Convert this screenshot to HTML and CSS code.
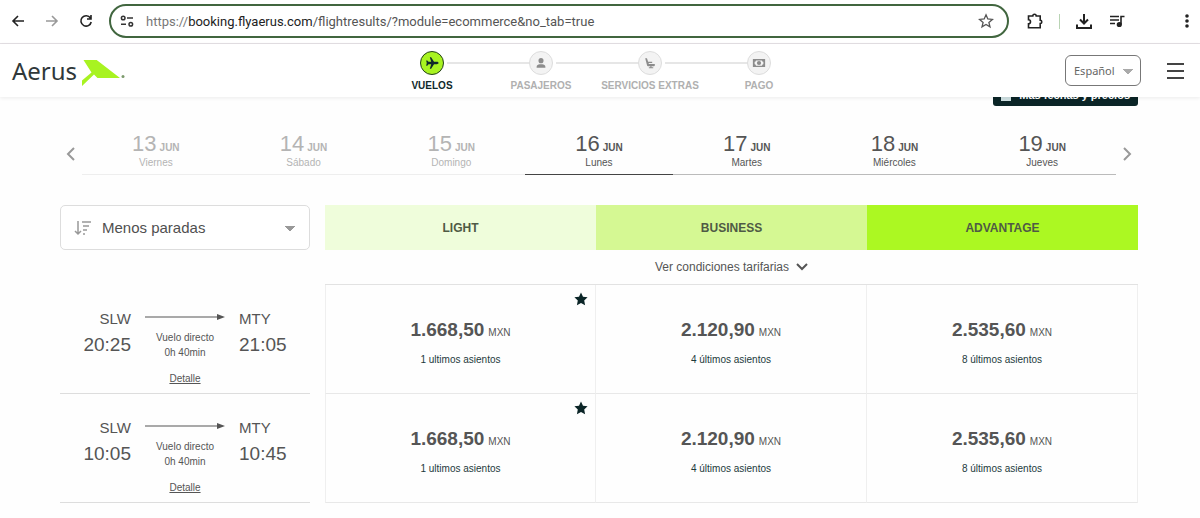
FILE: index.html
```html
<!DOCTYPE html>
<html lang="es">
<head>
    <meta charset="UTF-8">
    <meta name="viewport" content="width=device-width, initial-scale=1.0">
    <title>Aerus - Vuelos</title>
    <link rel="stylesheet" href="styles.css">
</head>
<body>
    <!-- Browser bar -->
    <div class="browser">
        <div class="nav-buttons">
            <button class="icon-btn" aria-label="Back"><svg viewBox="0 0 18 18"><path d="M15 9H4M9 4L4 9l5 5"/></svg></button>
            <button class="icon-btn muted" aria-label="Forward"><svg viewBox="0 0 18 18"><path d="M3 9h11M9 4l5 5-5 5"/></svg></button>
            <button class="icon-btn" aria-label="Reload"><svg viewBox="0 0 18 18"><path d="M13.4 6A5.2 5.2 0 1 0 14.2 10M14 3v4h-4"/></svg></button>
        </div>
        <div class="address">
            <svg class="site-info" viewBox="0 0 14 14"><circle cx="3.2" cy="4" r="1.8"/><path d="M7 4h6M1 10.2h5"/><circle cx="10.8" cy="10.2" r="1.8"/></svg>
            <div class="url"><span>https://</span>booking.flyaerus.com<span class="path">/flightresults/?module=ecommerce&amp;no_tab=true</span></div>
            <button class="icon-btn star-btn" aria-label="Bookmark"><svg viewBox="0 0 18 18"><path d="M9 2.8l1.8 4.2 4.6.4-3.5 3 1.1 4.5L9 12.5l-4 2.4 1.1-4.5-3.5-3 4.6-.4z"/></svg></button>
        </div>
        <div class="tools">
            <button class="icon-btn" aria-label="Extensions"><svg viewBox="0 0 18 18"><path d="M2.5 4h4.3a1.7 1.7 0 0 1 3.4 0h4v4.3a1.6 1.6 0 0 1 0 3.2v4.2H2.5v-3.9a2 2 0 0 0 0-4z"/></svg></button>
            <span class="divider"></span>
            <button class="icon-btn" aria-label="Downloads"><svg viewBox="0 0 18 18"><path class="thick" d="M9 2v9M5 7.5l4 4 4-4M2 12.5V16h14v-3.5"/></svg></button>
            <button class="icon-btn" aria-label="Media"><svg viewBox="0 0 18 18"><path d="M2 4.5h9M2 8h9M2 11.5h5M13 12.5V4.5h3.5"/><circle class="solid" cx="11.3" cy="12.5" r="1.8"/></svg></button>
            <button class="icon-btn menu-dots" aria-label="Menu"><svg viewBox="0 0 18 18"><circle class="solid" cx="9" cy="4" r="1"/><circle class="solid" cx="9" cy="9" r="1"/><circle class="solid" cx="9" cy="14" r="1"/></svg></button>
        </div>
    </div>

    <!-- Site header -->
    <header class="site-header">
        <a class="logo" href="#">
            <span>Aerus</span>
            <svg viewBox="0 0 44 28"><path d="M2.5 1H15.7L39 19H16.5L13 15.5 1 27V21.5L10.5 13.5z"/><circle cx="42" cy="17.5" r="1.5"/></svg>
        </a>
        <ol class="steps">
            <li class="step active">
                <span class="dot"><svg viewBox="0 0 16 16"><path d="M15.5 8c0-.9-1-1.3-2-1.3h-3.2L7 1.5H5.5l1.6 5.2H4L2.6 5H1.3L2 8l-.7 3h1.3L4 9.3h3.1L5.5 14.5H7l3.3-5.2h3.2c1 0 2-.4 2-1.3z"/></svg></span>
                VUELOS
            </li>
            <li class="step">
                <span class="dot"><svg viewBox="0 0 16 16"><circle cx="8" cy="5.3" r="2.9"/><path d="M3 13.5v-1.2c0-2 1.7-3 3.5-3h3c1.8 0 3.5 1 3.5 3v1.2z"/></svg></span>
                PASAJEROS
            </li>
            <li class="step">
                <span class="dot"><svg viewBox="0 0 16 16"><path d="M2.5 2.5h2l1.4 4h4.6V8H6.4l.3 1h6.8v1.5c0 .8-.7 1.2-1.5 1.2H9.7v1.1h2v1.2h-5v-1.2h1.7v-1.1H6.3c-1 0-1.5-.5-1.7-1.2z"/></svg></span>
                SERVICIOS EXTRAS
            </li>
            <li class="step">
                <span class="dot"><svg viewBox="0 0 16 16"><path fill-rule="evenodd" d="M1 3.5h14v9H1zM4.5 5c0 .8-.7 1.5-1.5 1.5v3c.8 0 1.5.7 1.5 1.5h7c0-.8.7-1.5 1.5-1.5v-3c-.8 0-1.5-.7-1.5-1.5z"/><circle cx="8" cy="8" r="2.4"/></svg></span>
                PAGO
            </li>
        </ol>
        <div class="header-right">
            <select class="language" aria-label="Idioma">
                <option>Español</option>
                <option>English</option>
            </select>
            <button class="hamburger" aria-label="Menú"><span></span><span></span><span></span></button>
        </div>
    </header>

    <main>
        <button class="more-dates">
            <svg viewBox="0 0 12 12"><path d="M1 2h2V0h1.500v2h3V0H9v2h2v10H1z"/></svg>
            Más fechas y precios
        </button>

        <!-- Day selector -->
        <nav class="days" aria-label="Fechas">
            <button class="arrow" aria-label="Anterior"><svg viewBox="0 0 10 14"><path d="M8 1L2 7l6 6"/></svg></button>
            <button class="day past"><span class="date">13 <b>JUN</b></span><span class="weekday">Viernes</span></button>
            <button class="day past"><span class="date">14 <b>JUN</b></span><span class="weekday">Sábado</span></button>
            <button class="day past"><span class="date">15 <b>JUN</b></span><span class="weekday">Domingo</span></button>
            <button class="day selected"><span class="date">16 <b>JUN</b></span><span class="weekday">Lunes</span></button>
            <button class="day"><span class="date">17 <b>JUN</b></span><span class="weekday">Martes</span></button>
            <button class="day"><span class="date">18 <b>JUN</b></span><span class="weekday">Miércoles</span></button>
            <button class="day"><span class="date">19 <b>JUN</b></span><span class="weekday">Jueves</span></button>
            <button class="arrow" aria-label="Siguiente"><svg viewBox="0 0 10 14"><path d="M2 1l6 6-6 6"/></svg></button>
        </nav>

        <!-- Flights and fares -->
        <table class="flights">
            <thead>
                <tr class="fares">
                    <td class="sort-cell">
                        <div class="sort">
                            <svg viewBox="0 0 18 16"><path d="M4 1v13M1 11l3 3 3-3M8 2h9M9 6h6M9 10h4M9 14h2"/></svg>
                            <select aria-label="Ordenar por">
                                <option>Menos paradas</option>
                                <option>Menor precio</option>
                            </select>
                        </div>
                    </td>
                    <th class="light" scope="col">LIGHT</th>
                    <th class="business" scope="col">BUSINESS</th>
                    <th class="advantage" scope="col">ADVANTAGE</th>
                </tr>
                <tr>
                    <td></td>
                    <td class="conditions" colspan="3">
                        <button>Ver condiciones tarifarias <svg viewBox="0 0 12 8"><path d="M1 1l5 5 5-5"/></svg></button>
                    </td>
                </tr>
            </thead>
            <tbody>
                <tr>
                    <th class="flight" scope="row">
                        <div class="route">
                            <div class="place from"><span>SLW</span><time>20:25</time></div>
                            <div class="info">
                                <svg viewBox="0 0 80 6"><path d="M0 2.5h73v1H0zM72 0l8 3-8 3z"/></svg>
                                <span>Vuelo directo</span>
                                <span>0h 40min</span>
                                <a href="#">Detalle</a>
                            </div>
                            <div class="place"><span>MTY</span><time>21:05</time></div>
                        </div>
                    </th>
                    <td class="fare">
                        <svg class="best" viewBox="0 0 14 14"><path d="M7 .5l2 4.3 4.6.5-3.4 3.2.9 4.7L7 10.9l-4.1 2.3.9-4.7L.4 5.3 5 4.8z"/></svg>
                        <button><span class="price"><b>1.668,50</b> MXN</span><span class="seats">1 ultimos asientos</span></button>
                    </td>
                    <td class="fare"><button><span class="price"><b>2.120,90</b> MXN</span><span class="seats">4 últimos asientos</span></button></td>
                    <td class="fare"><button><span class="price"><b>2.535,60</b> MXN</span><span class="seats">8 últimos asientos</span></button></td>
                </tr>
                <tr>
                    <th class="flight" scope="row">
                        <div class="route">
                            <div class="place from"><span>SLW</span><time>10:05</time></div>
                            <div class="info">
                                <svg viewBox="0 0 80 6"><path d="M0 2.5h73v1H0zM72 0l8 3-8 3z"/></svg>
                                <span>Vuelo directo</span>
                                <span>0h 40min</span>
                                <a href="#">Detalle</a>
                            </div>
                            <div class="place"><span>MTY</span><time>10:45</time></div>
                        </div>
                    </th>
                    <td class="fare">
                        <svg class="best" viewBox="0 0 14 14"><path d="M7 .5l2 4.3 4.6.5-3.4 3.2.9 4.7L7 10.9l-4.1 2.3.9-4.7L.4 5.3 5 4.8z"/></svg>
                        <button><span class="price"><b>1.668,50</b> MXN</span><span class="seats">1 ultimos asientos</span></button>
                    </td>
                    <td class="fare"><button><span class="price"><b>2.120,90</b> MXN</span><span class="seats">4 últimos asientos</span></button></td>
                    <td class="fare"><button><span class="price"><b>2.535,60</b> MXN</span><span class="seats">8 últimos asientos</span></button></td>
                </tr>
            </tbody>
        </table>
    </main>
</body>
</html>
```
FILE: styles.css
```css
* {
    box-sizing: border-box;
}

body {
    margin: 0;
    font-family: "Liberation Sans", Arial, sans-serif;
    background: #fefefe;
    color: #555;
}

button {
    font-family: inherit;
    color: inherit;
    background: none;
    border: none;
    padding: 0;
    cursor: pointer;
}

svg {
    display: block;
}

/* Browser bar */
.browser {
    display: flex;
    align-items: center;
    gap: 14px;
    height: 44px;
    padding: 0 4px 1px 9px;
    background: #fff;
    border-bottom: 1px solid #e4e0e4;
}

.nav-buttons {
    display: flex;
    gap: 16px;
}

.icon-btn svg {
    width: 18px;
    height: 18px;
    fill: none;
    stroke: #222;
    stroke-width: 1.6;
}

.icon-btn .thick {
    stroke-width: 2;
}

.icon-btn .solid {
    fill: #222;
}

.icon-btn.muted svg {
    stroke: #999;
}

.address {
    flex: 1;
    display: flex;
    align-items: center;
    gap: 12px;
    height: 34px;
    padding: 0 12px 0 9px;
    border: 2px solid #41663f;
    border-radius: 17px;
}

.site-info {
    width: 14px;
    height: 14px;
    fill: none;
    stroke: #333;
    stroke-width: 1.5;
}

.url {
    flex: 1;
    font-family: Roboto, "Noto Sans", sans-serif;
    font-size: 13px;
    color: #222;
    white-space: nowrap;
}

.url span {
    color: #777;
}

.url .path {
    color: #555;
}

.icon-btn.star-btn svg {
    stroke: #555;
    stroke-width: 1.3;
}

.tools {
    display: flex;
    align-items: center;
    gap: 15px;
    width: 173px;
    padding-left: 3px;
}

.divider {
    width: 1px;
    height: 15px;
    background: #b9d4b4;
}

.menu-dots {
    margin-left: auto;
}

/* Site header */
.site-header {
    position: relative;
    z-index: 2;
    display: grid;
    grid-template-columns: 1fr auto 1fr;
    height: 53px;
    padding: 0 16px 0 12px;
    background: #fff;
    box-shadow: 0 1px 4px rgba(0, 0, 0, 0.08);
}

.logo {
    display: flex;
    align-items: center;
    gap: 4px;
    font-family: "Noto Sans", "Open Sans", sans-serif;
    font-size: 24px;
    line-height: 32px;
    color: #30383a;
    text-decoration: none;
}

.logo svg {
    width: 44px;
    height: 28px;
    margin-top: 4px;
    fill: #a8f321;
}

.logo circle {
    fill: #7c9a6c;
}

.steps {
    display: grid;
    grid-template-columns: repeat(4, 109px);
    margin: 0 5px 0 0;
    padding: 7px 0 0;
    list-style: none;
}

.step {
    position: relative;
    display: flex;
    flex-direction: column;
    align-items: center;
    gap: 5px;
    font-size: 10px;
    line-height: 12px;
    font-weight: bold;
    color: #b0b0b0;
    white-space: nowrap;
}

/* line that joins a step with the next one */
.step:not(:last-child)::after {
    content: "";
    position: absolute;
    top: 11px;
    left: calc(50% + 15px);
    width: calc(100% - 26px);
    height: 2px;
    background: #e6e6e6;
}

.step.active {
    color: #10292b;
}

.dot {
    display: flex;
    align-items: center;
    justify-content: center;
    width: 24px;
    height: 24px;
    border: 1px solid #ddd;
    border-radius: 50%;
    background: #f3f3f3;
}

.dot svg {
    width: 14px;
    height: 14px;
    fill: #8c8c8c;
}

.active .dot {
    border-color: #24401c;
    background: #a8f321;
}

.active .dot svg {
    fill: #10292b;
}

.header-right {
    display: flex;
    align-items: center;
    justify-content: flex-end;
    gap: 26px;
}

.language {
    appearance: none;
    width: 76px;
    height: 31px;
    padding: 0 8px;
    border: 1px solid #777;
    border-radius: 6px;
    background: linear-gradient(to bottom right, #aaa 50%, transparent 50%) 62px 13px / 5px 6px no-repeat,
        linear-gradient(to bottom left, #aaa 50%, transparent 50%) 57px 13px / 5px 6px no-repeat, #fff;
    font-family: "Noto Sans", "Open Sans", sans-serif;
    font-size: 11px;
    color: #666;
}

.hamburger {
    display: flex;
    flex-direction: column;
    gap: 5px;
    width: 17px;
}

.hamburger span {
    height: 2px;
    background: #444;
}

/* Content */
main {
    padding: 0 62px 14px 60px;
}

.more-dates {
    display: flex;
    align-items: center;
    gap: 7px;
    height: 22px;
    margin: -13px 0 0 auto;
    padding: 0 8px 0 7px;
    border-radius: 3px;
    background: #0b2527;
    color: #fff;
    font-size: 11px;
    font-weight: bold;
}

.more-dates svg {
    width: 12px;
    height: 12px;
    fill: #cfe0e2;
}

.days {
    display: grid;
    grid-template-columns: 22px repeat(7, 1fr) 22px;
    padding-top: 26px;
}

.day {
    display: flex;
    flex-direction: column;
    align-items: center;
    padding-bottom: 4px;
    border-bottom: 1px solid #bbb;
}

.day.past {
    color: #b4b4b4;
    border-color: #eee;
}

.day.selected {
    border-color: #444;
}

.date {
    display: flex;
    align-items: baseline;
    gap: 3px;
    font-size: 22px;
    line-height: 24px;
}

.date b {
    font-size: 10px;
    line-height: 12px;
}

.weekday {
    font-size: 10px;
    line-height: 14px;
}

.arrow {
    display: flex;
    align-items: center;
    justify-content: center;
}

.arrow svg {
    width: 10px;
    height: 14px;
    fill: none;
    stroke: #999;
    stroke-width: 2;
}

/* Flights table */
.flights {
    width: 100%;
    margin-top: 30px;
    border-spacing: 0;
    table-layout: fixed;
}

.flights td,
.flights th {
    padding: 0;
    vertical-align: top;
}

.flights .sort-cell {
    width: 265px;
}

.sort {
    position: relative;
    width: 250px;
}

.sort svg {
    position: absolute;
    top: 15px;
    left: 14px;
    width: 18px;
    height: 16px;
    fill: none;
    stroke: #999;
    stroke-width: 1.5;
    pointer-events: none;
}

.sort select {
    display: block;
    appearance: none;
    width: 100%;
    height: 45px;
    padding: 0 41px;
    border: 1px solid #ddd;
    border-radius: 5px;
    background: linear-gradient(to bottom right, #999 50%, transparent 50%) 229px 20px / 5px 6px no-repeat,
        linear-gradient(to bottom left, #999 50%, transparent 50%) 224px 20px / 5px 6px no-repeat, #fff;
    font-family: inherit;
    font-size: 15px;
    color: #505050;
}

.flights .fares th {
    height: 45px;
    vertical-align: middle;
    font-size: 12px;
    color: #4f5a45;
}

.light {
    background: #effddb;
}

.business {
    background: #d5f893;
}

.advantage {
    background: #acf822;
}

.conditions {
    height: 35px;
    border-bottom: 1px solid #e2e2e2;
    text-align: center;
}

.conditions button {
    display: inline-flex;
    align-items: center;
    gap: 7px;
    height: 34px;
    font-size: 12px;
}

.conditions svg {
    width: 12px;
    height: 8px;
    fill: none;
    stroke: #555;
    stroke-width: 2;
}

.flight {
    font-weight: normal;
    text-align: left;
}

.route {
    display: grid;
    grid-template-columns: 1fr 80px 1fr;
    gap: 14px;
    width: 250px;
    height: 109px;
    padding-top: 22px;
    border-bottom: 1px solid #ddd;
}

.place {
    display: flex;
    flex-direction: column;
    font-size: 15px;
    line-height: 24px;
}

.from {
    align-items: flex-end;
}

.place time {
    font-size: 19px;
    line-height: 28px;
}

.info {
    display: flex;
    flex-direction: column;
    align-items: center;
    padding-top: 7px;
    font-size: 10px;
    line-height: 15px;
}

.info svg {
    width: 80px;
    height: 6px;
    margin-bottom: 10px;
    fill: #555;
}

.info a {
    margin-top: 11px;
    color: #555;
}

.fare {
    position: relative;
    border-bottom: 1px solid #e8e8e8;
    border-right: 1px solid #efefef;
}

.flight + .fare {
    border-left: 1px solid #efefef;
}

.fare button {
    display: flex;
    flex-direction: column;
    align-items: center;
    gap: 11px;
    width: 100%;
    padding: 33px 0 26px;
}

.price {
    display: flex;
    align-items: baseline;
    gap: 4px;
    font-size: 10px;
    line-height: 12px;
}

.price b {
    font-size: 19px;
    line-height: 24px;
}

.seats {
    font-size: 10px;
    line-height: 14px;
    color: #1d3a3c;
}

.best {
    position: absolute;
    top: 7px;
    right: 7px;
    width: 14px;
    height: 14px;
    fill: #0b2527;
}
```
